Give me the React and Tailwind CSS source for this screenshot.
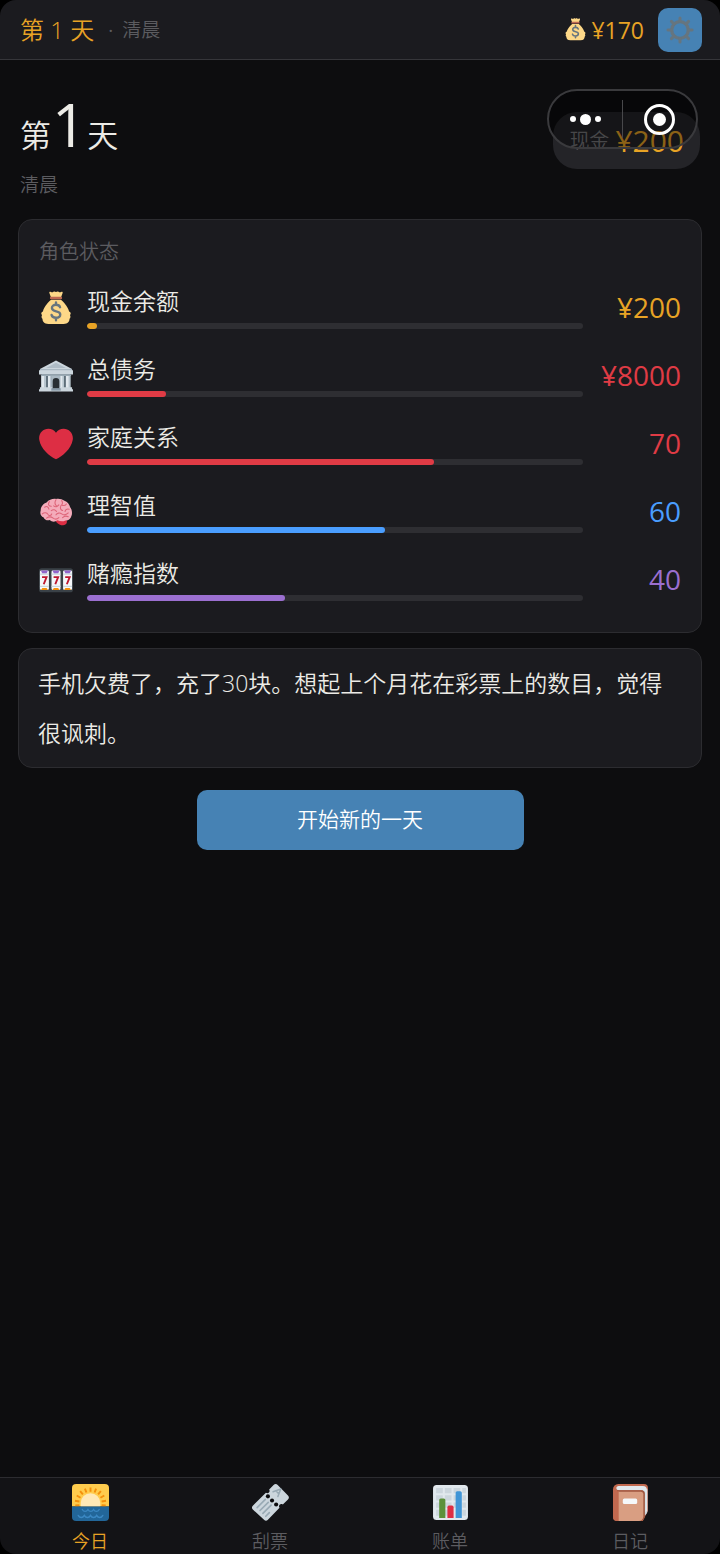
import React from "react";

function MoneyBag({ className }) {
  return (
    <svg viewBox="0 0 36 36" className={className} aria-hidden="true">
      <path fill="#FDD888" d="M31.9 21.7C30.1 15.2 25.6 11.4 23.2 9.2H12.8C10.4 11.4 5.9 15.2 4.1 21.7c-2.2.9-2 2.8-.9 3.8-1 1.700-.4 3.300.5 4 0 2.800 1.500 5.500 6.300 5.500h16c4.800 0 6.300-2.700 6.300-5.500.9-.7 1.500-2.300.5-4 1.100-1 1.300-2.900-.9-3.800z" />
      <path fill="#FDD888" d="M12.600 6.500 11 2.200c-.4-1.200.6-1.700 1.600-1.200 1 .5 1.800.5 2.700-.2.8-.6 1.500-.5 2.700.2 1.200-.7 1.900-.8 2.700-.2.9.7 1.700.7 2.700.2 1-.5 2 0 1.600 1.200l-1.600 4.300z" />
      <rect x="11.500" y="6" width="13" height="2.800" rx="1.400" fill="#BF6952" />
      <path fill="none" stroke="#67757F" strokeWidth="2.500" strokeLinecap="round" d="M22.300 17.200c-.6-1.900-2.300-2.600-4.300-2.600-2.500 0-4.300 1.300-4.300 3.400 0 5 8.800 2.200 8.800 6.800 0 2.200-1.900 3.500-4.500 3.500-2.400 0-4.200-1-4.700-3M18 12v2.500M18 28.500V31" />
    </svg>
  );
}

function Bank({ className }) {
  return (
    <svg viewBox="0 0 36 36" className={className} aria-hidden="true">
      <path fill="#5B6B76" d="M3 16h30v16H3z" />
      <path fill="#AAB8C2" d="M1 10.500h34V14H1z" />
      <path fill="#CCD6DD" d="M18 1.500 35 10.500H1z" />
      <path fill="#AFBCC6" d="M18 4 28.500 9.500h-21z" />
      <path fill="#CCD6DD" d="M0 12h36v4.500H0z" />
      <path fill="#9AAAB4" d="M2 16.500h32V18H2z" />
      <path fill="#B8C5CE" d="M2.500 18h5v13h-5zM9.500 18h4v13h-4zM22.500 18h4v13h-4zM28.500 18h5v13h-5z" />
      <path fill="#E1E8ED" d="M2.500 18h2.800v13H2.500zM9.500 18h2.200v13H9.500zM22.500 18h2.200v13h-2.200zM28.500 18h2.800v13h-2.800z" />
      <path fill="#AAB8C2" d="M13.500 18h9v13h-9z" />
      <path fill="#292F33" d="M14.500 31v-7.500a3.500 3.500 0 0 1 7 0V31z" />
      <path fill="#CCD6DD" d="M1 30h13v3H1zM22 30h13v3H22zM0 32h36v2.500H0z" />
      <path fill="#8899A6" d="M13 31h10v2.500H13z" />
    </svg>
  );
}

function Heart({ className }) {
  return (
    <svg viewBox="0 0 36 36" className={className} aria-hidden="true">
      <path fill="#DD2E44" d="M35.885 11.833c0-5.450-4.418-9.868-9.867-9.868-3.308 0-6.227 1.633-8.018 4.129-1.791-2.496-4.710-4.129-8.017-4.129-5.450 0-9.868 4.417-9.868 9.868 0 .772.098 1.520.266 2.241C1.751 22.587 11.216 31.568 18 34.034c6.783-2.466 16.249-11.447 17.617-19.959.170-.721.268-1.469.268-2.242z" />
    </svg>
  );
}

function Brain({ className }) {
  return (
    <svg viewBox="0 0 36 36" className={className} aria-hidden="true">
      <path fill="#DD2E44" d="M20 25c3-2 9-1 9.500 2.500C30 31 26.500 32.500 23.500 32c-2.500-.5-5-2.500-6-5z" />
      <path fill="#F4ABBA" d="M18 4.200c3-.6 6.500 0 9 2 3 1.200 5.300 3.800 6 6.800 2 2.500 2.500 6.500 1.300 9.300-.6 3-3.300 5-6.300 4.700-3 1.500-6 .8-8.500-.2-2.500 2-6 1.800-8-.3-3 1-5.700-.5-6.500-2.800C2 22.500.8 19.500 1.700 17 1.700 12.500 4.500 9 8 8c2.500-3 6.500-4.300 10-3.800z" />
      <path fill="none" stroke="#DD6478" strokeWidth="1.100" strokeLinecap="round" strokeLinejoin="round" d="M11 7c-2 3-.5 5 2 5M6 13c2-1.500 4-.5 4.500 2M3.500 20c2-2 5-1.500 6 .5s3.500 1.500 4-.5M13 16.500c2-1.500 4.500-1 5.500 1M18 5c-1.500 2.500-1.300 5 .5 6.500M15.500 11.500c2 1.500 4 1 5.500-1M24 6c1.500 2 .8 4.500-1 5.500M23 12c-.8 2 0 4 2 4.500M29 9.500c-1 1.500-2.500 2-4 1.500M32 15c-2-.5-4 .5-4.500 2.500M18 21c1-2 4-2.500 6-1s5 1 7-1M8 24.500c2-1.500 5-1.500 7 0s4.500 1 6-.5M25 24c1.500-1.500 4-2 6-1" />
    </svg>
  );
}

function Reel({ x }) {
  return (
    <g>
      <rect x={x} y="8" width="9.500" height="20.500" rx="1.200" fill="#F5F8FA" />
      <path fill="#9266CC" d={`M${x + 1} 8h7.500l-1.500 3H${x + 2.500}z`} />
      <path fill="#CCD6DD" d={`M${x} 11h9.500v1.500H${x}zM${x} 24h9.500v1.500H${x}z`} />
      <path fill="#F4900C" d={`M${x + 1} 28.500h7.500l-1.500-2H${x + 2.500}z`} />
      <path fill="none" stroke="#BE1931" strokeWidth="2" d={`M${x + 2.200} 15h4.800L${x + 4} 22.500`} />
    </g>
  );
}

function Slots({ className }) {
  return (
    <svg viewBox="0 0 36 36" className={className} aria-hidden="true">
      <rect y="5.500" width="36" height="25.500" rx="3" fill="#3A4147" />
      <Reel x={1} />
      <Reel x={13.25} />
      <Reel x={25.5} />
    </svg>
  );
}

function Sunrise({ className }) {
  return (
    <svg viewBox="0 0 36 36" className={className} aria-hidden="true">
      <path fill="#FFCC4D" d="M0 22V4a4 4 0 0 1 4-4h28a4 4 0 0 1 4 4v18z" />
      <path fill="none" stroke="#F4900C" strokeWidth="1.900" d="M18 3.500v4M12.600 4.500l1.400 3.800M23.400 4.500l-1.400 3.800M7.900 7l2.700 3.200M28.100 7l-2.700 3.200M4.600 11.200l3.700 2.200M31.400 11.200l-3.700 2.200M2.900 16.300l4.300.8M33.100 16.300l-4.300.8M3.200 21l4-.4M32.800 21l-4-.4" />
      <path fill="#FFE8B6" d="M8.500 22v-3.500a9.500 9.500 0 0 1 19 0V22z" />
      <path fill="#226699" d="M0 22h36v10a4 4 0 0 1-4 4H4a4 4 0 0 1-4-4z" />
      <path fill="none" stroke="#3B88C3" strokeWidth="1.300" strokeLinecap="round" d="M10 24.800c1.500 2.500 4 2.500 5.500 0 1.500 2.500 4 2.500 5.500 0 1.500 2.500 4 2.500 5.500 0M6 30.500c1.500 2.800 4.500 2.800 6 0 1.500 2.800 4.500 2.800 6 0 1.500 2.800 4.500 2.800 6 0 1.500 2.800 4.500 2.800 6 0" />
    </svg>
  );
}

function Ticket({ className }) {
  return (
    <svg viewBox="0 0 36 36" className={className} aria-hidden="true">
      <path fill="#CCD6DD" d="M.8 21.200 13.500 8.500c1 .7 2.200.6 3-.2s.8-2 .2-3L21 1c1.200-1.200 2.800-1.200 4 0l10 10.200c1.200 1.200 1.200 2.600 0 3.800l-5 5c-1-.7-2.300-.6-3.100.2s-.8 2.100-.1 3L15.500 34.800c-1.200 1.200-2.600 1.200-3.800 0L.8 24.800c-1.100-1.100-1.100-2.500 0-3.600z" />
      <g fill="#0b0b0d">
        <circle cx="15.500" cy="12" r="2" />
        <circle cx="19.500" cy="16" r="2" />
        <circle cx="23.500" cy="20" r="2" />
      </g>
      <path fill="none" stroke="#99AAB5" strokeWidth="1.600" strokeLinecap="round" d="M5 23l8-8M7.800 25.800l8-8M10.600 28.600l8-8M13.400 31.400l3.500-3.500" />
      <path fill="none" stroke="#99AAB5" strokeWidth="1.500" strokeLinecap="round" strokeLinejoin="round" d="M20.500 7.500 28 4.800 25.200 12.200M23.500 6.800l2.500 2.700" />
    </svg>
  );
}

function BarChart({ className }) {
  return (
    <svg viewBox="0 0 36 36" className={className} aria-hidden="true">
      <rect x="1" y="1" width="34" height="34" rx="3.500" fill="#E1E8ED" />
      <path fill="#CCD6DD" d="M4 4h6.500v5H4zM12.500 4H19v5h-6.500zM21 4h6.500v5H21zM29.500 4H33v5h-3.500zM4 11h6.500v5H4zM12.500 11H19v5h-6.500zM21 11h6.500v5H21zM29.500 11H33v5h-3.500zM4 18h6.500v5H4zM12.500 18H19v5h-6.500zM21 18h6.500v5H21zM29.500 18H33v5h-3.500zM4 25h6.500v6H4zM12.500 25H19v6h-6.500zM29.500 25H33v6h-3.500z" />
      <path fill="#5C913B" d="M7 33V15.500A1.500 1.500 0 0 1 8.500 14h3a1.500 1.500 0 0 1 1.500 1.500V33z" />
      <path fill="#DD2E44" d="M15 33V22.500a1.500 1.500 0 0 1 1.500-1.500h3a1.500 1.500 0 0 1 1.500 1.500V33z" />
      <path fill="#4095D6" d="M23 33V8.500A1.500 1.500 0 0 1 24.500 7h3A1.500 1.500 0 0 1 29 8.500V33z" />
    </svg>
  );
}

function Notebook({ className }) {
  return (
    <svg viewBox="0 0 36 36" className={className} aria-hidden="true">
      <path fill="#C1694F" d="M1 5a5 5 0 0 1 5-5h25a4 4 0 0 1 4 4v22l-5 10H5a4 4 0 0 1-4-4z" />
      <path fill="#CCD6DD" d="M30 5h4.500v21c0 2-1 3.500-4.500 6z" />
      <path fill="#E1E8ED" d="M6.500 2H30a4 4 0 0 1 4 4v20l-1.500 1.500V9a3 3 0 0 0-3-3H6.500c-3 0-3-4 0-4z" />
      <path fill="#A0563F" d="M5 6h23.500A3.500 3.500 0 0 1 32 9.500V31c0 3-2 5-5 5H5z" />
      <path fill="#C1694F" d="M1 4.500C1.500 6 3 7 5 7h2v29H5a4 4 0 0 1-4-4z" />
      <path fill="#D99E82" d="M6.500 7.500H28A2.500 2.500 0 0 1 30.500 10v21.500A4.500 4.500 0 0 1 26 36H6.500z" />
      <rect x="10.500" y="14" width="14" height="5.500" rx="1.500" fill="#F5F8FA" />
    </svg>
  );
}

function Gear({ className }) {
  return (
    <svg viewBox="0 0 36 36" className={className} aria-hidden="true" fill="none" stroke="#66757F">
      <circle cx="18" cy="18" r="10" strokeWidth="4" />
      <path strokeWidth="3.600" strokeLinecap="round" d="M18 3.500v4M18 28.500v4M3.500 18h4M28.500 18h4M7.700 7.700l2.900 2.900M25.400 25.400l2.900 2.900M7.700 28.300l2.900-2.900M25.400 10.600l2.900-2.900" />
    </svg>
  );
}

const stats = [
  { Icon: MoneyBag, label: "现金余额", value: "¥200", pct: 2, text: "text-[#e8a325]", bar: "bg-[#e8a325]" },
  { Icon: Bank, label: "总债务", value: "¥8000", pct: 16, text: "text-[#e03b45]", bar: "bg-[#e03b45]" },
  { Icon: Heart, label: "家庭关系", value: "70", pct: 70, text: "text-[#e03b45]", bar: "bg-[#e03b45]" },
  { Icon: Brain, label: "理智值", value: "60", pct: 60, text: "text-[#4a9eff]", bar: "bg-[#4a9eff]" },
  { Icon: Slots, label: "赌瘾指数", value: "40", pct: 40, text: "text-[#9b6fd0]", bar: "bg-[#9b6fd0]" },
];

const tabs = [
  { Icon: Sunrise, label: "今日", active: true },
  { Icon: Ticket, label: "刮票" },
  { Icon: BarChart, label: "账单" },
  { Icon: Notebook, label: "日记" },
];

function Capsule() {
  return (
    <div className="absolute right-[22px] top-[29px] flex h-[60px] w-[151px] items-center rounded-full border-2 border-[#3a3a3d] bg-black/40">
      <button type="button" aria-label="更多" className="flex flex-1 items-center justify-center gap-1">
        <span className="size-[6px] rounded-full bg-white" />
        <span className="size-[11px] rounded-full bg-white" />
        <span className="size-[6px] rounded-full bg-white" />
      </button>
      <span className="h-[38px] w-px bg-[#48484b]" />
      <button type="button" aria-label="关闭" className="flex flex-1 items-center justify-center">
        <span className="flex size-[31px] items-center justify-center rounded-full border-[3px] border-white">
          <span className="size-[13px] rounded-full bg-white" />
        </span>
      </button>
    </div>
  );
}

export default function App() {
  return (
    <div className="flex min-h-screen flex-col bg-[#0d0d0f] font-['Open_Sans','Noto_Sans_CJK_SC',sans-serif] font-[350] text-[#ecebe6]">
      <div className="bg-black">
        <header className="flex h-[60px] items-center rounded-t-2xl border-b border-[#36363a] bg-[#1b1b1f] pl-5 pr-[18px]">
          <span className="text-[24px] leading-8 text-[#e8a325]">第 1 天</span>
          <span className="ml-[14px] flex gap-[9px] text-[19px] leading-8 text-[#5c5c60]">
            <span className="font-normal">·</span>
            <span>清晨</span>
          </span>
          <span className="ml-auto flex items-center gap-1 text-[23px] font-normal leading-8 text-[#e8a325]">
            <MoneyBag className="size-[23px]" />
            ¥170
          </span>
          <button type="button" aria-label="设置" className="ml-[14px] flex size-11 items-center justify-center rounded-[10px] bg-[#4682b4]">
            <Gear className="size-[30px]" />
          </button>
        </header>
      </div>

      <main className="relative flex flex-1 flex-col px-[18px] pt-8">
        <div className="flex items-start justify-between pl-[2px]">
          <div>
            <h1 className="flex items-baseline gap-[1px] text-[31px] leading-[64px]">
              <span>第</span>
              <span className="text-[60px] font-normal">1</span>
              <span>天</span>
            </h1>
            <p className="mt-1 text-[19px] leading-7 text-[#5c5c60]">清晨</p>
          </div>
          <div className="mr-[2px] mt-5 flex h-[57px] items-center gap-[6px] rounded-[24px] bg-[#242428] px-4">
            <span className="text-[20px] leading-8 text-[#77777b]">现金</span>
            <span className="text-[30px] font-normal leading-8 text-[#e8a325]">¥200</span>
          </div>
        </div>
        <Capsule />

        <section className="mt-5 rounded-[14px] border border-[#2c2c30] bg-[#1b1b1f] px-5 pb-[31px] pt-5">
          <h2 className="text-[20px] leading-6 text-[#5c5c60]">角色状态</h2>
          <ul className="mt-[23px] flex flex-col gap-[26px]">
            {stats.map(({ Icon, label, value, pct, text, bar }) => (
              <li key={label} className="flex items-center gap-[14px]">
                <Icon className="size-[34px] shrink-0" />
                <div className="flex-1">
                  <div className="text-[23px] leading-7">{label}</div>
                  <div className="mt-2 h-[6px] overflow-hidden rounded-full bg-[#2e2e32]">
                    <div className={`h-full rounded-full ${bar}`} style={{ width: `${pct}%` }} />
                  </div>
                </div>
                <span className={`w-[84px] pb-[2px] text-right text-[28px] font-normal leading-8 ${text}`}>{value}</span>
              </li>
            ))}
          </ul>
        </section>

        <p className="mt-[15px] rounded-[14px] border border-[#2c2c30] bg-[#1b1b1f] px-[19px] py-[9px] text-[23px] leading-[50px]">
          手机欠费了，充了30块。想起上个月花在彩票上的数目，觉得很讽刺。
        </p>

        <button type="button" className="mt-[22px] h-[60px] w-[327px] self-center rounded-[10px] bg-[#4682b4] text-[21px] text-white">
          开始新的一天
        </button>
      </main>

      <div className="bg-black">
        <nav className="grid grid-cols-4 rounded-b-2xl border-t border-[#2c2c30] bg-[#131316] pt-[6px]">
          {tabs.map(({ Icon, label, active }) => (
            <a key={label} href="#" className={`flex flex-col items-center gap-[7px] text-[18px] leading-[26px] ${active ? "text-[#e8a325]" : "text-[#5c5c60]"}`}>
              <Icon className="size-[37px]" />
              {label}
            </a>
          ))}
        </nav>
      </div>
    </div>
  );
}
